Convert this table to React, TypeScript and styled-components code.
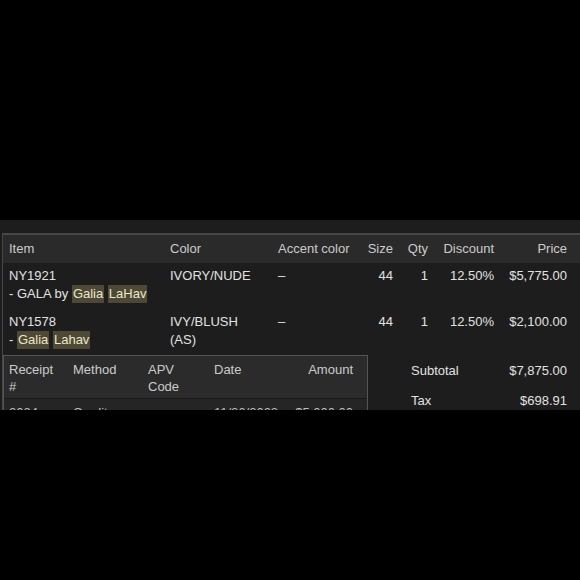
import { FC, ReactNode } from 'react';
import styled, { createGlobalStyle } from 'styled-components';

const Global = createGlobalStyle`
  html, body {
    margin: 0;
    background: #000;
  }
  body {
    font-family: 'Liberation Sans', Arial, Helvetica, sans-serif;
    font-size: 13px;
  }
`;

const itemCols = '161px 108px 86px 39px 35px 66px 1fr';
const payCols = '64px 75px 66px 70px 1fr';

const Page = styled.div`
  width: 580px;
  height: 580px;
  display: flex;
  flex-direction: column;
  background: #000;
`;

const Spacer = styled.div`
  height: 220px;
  flex: none;
`;

const Panel = styled.div`
  height: 190px;
  flex: none;
  overflow: hidden;
  background: #1d1d1d;
  padding-top: 13px;
  box-sizing: border-box;
`;

const Table = styled.div`
  margin-left: 2px;
  border-top: 2px solid #474747;
  border-left: 1px solid #474747;
`;

const Row = styled.div<{ $head?: boolean }>`
  display: grid;
  grid-template-columns: ${itemCols};
  background: ${(p) => (p.$head ? '#2a2a2a' : '#1d1d1d')};
  color: ${(p) => (p.$head ? '#cbcbcb' : '#e2e2e2')};
  padding: ${(p) => (p.$head ? '5px 0 5px' : '4px 0 6px')};
  line-height: 18px;
`;

const Cell = styled.div<{ $right?: boolean }>`
  padding: ${(p) => (p.$right ? '0 4px 0 0' : '0 0 0 6px')};
  text-align: ${(p) => (p.$right ? 'right' : 'left')};
  white-space: nowrap;
`;

const PriceCell = styled.div`
  padding-right: 13px;
  text-align: right;
  white-space: nowrap;
`;

const Mark = styled.span`
  display: inline-block;
  background: #4e4934;
  color: #ebe6cc;
  padding: 0 1px;
  line-height: 18px;
`;

const Bottom = styled.div`
  display: flex;
`;

const Payments = styled.div`
  width: 365px;
  flex: none;
  border: 1px solid #555;
  border-bottom: none;
  box-sizing: border-box;
`;

const PayRow = styled.div<{ $head?: boolean }>`
  display: grid;
  grid-template-columns: ${payCols};
  background: ${(p) => (p.$head ? '#2b2b2b' : '#252525')};
  color: ${(p) => (p.$head ? '#cbcbcb' : '#bcbcbc')};
  padding: ${(p) => (p.$head ? '5px 0 3px' : '5px 0')};
  line-height: 17px;
  border-bottom: 1px solid #1a1a1a;
  white-space: nowrap;
`;

const PayCell = styled.div`
  padding-left: 5px;
`;

const PayAmount = styled.div`
  padding-right: 14px;
  text-align: right;
`;

const Summary = styled.div`
  flex: 1;
  display: flex;
  flex-direction: column;
  gap: 12px;
  padding: 7px 13px 0 43px;
  color: #e2e2e2;
  line-height: 18px;
`;

const SumRow = styled.div`
  display: flex;
  justify-content: space-between;
`;

const Item: FC<{ code: string; children: ReactNode }> = ({ code, children }) => (
  <Cell>
    {code}
    <br />
    {children}
  </Cell>
);

export default function App() {
  return (
    <Page>
      <Global />
      <Spacer />
      <Panel>
        <Table>
          <Row $head>
            <Cell>Item</Cell>
            <Cell>Color</Cell>
            <Cell>Accent color</Cell>
            <Cell $right>Size</Cell>
            <Cell $right>Qty</Cell>
            <Cell $right>Discount</Cell>
            <PriceCell>Price</PriceCell>
          </Row>
          <Row>
            <Item code="NY1921">
              - GALA by <Mark>Galia</Mark> <Mark>LaHav</Mark>
            </Item>
            <Cell>IVORY/NUDE</Cell>
            <Cell>–</Cell>
            <Cell $right>44</Cell>
            <Cell $right>1</Cell>
            <Cell $right>12.50%</Cell>
            <PriceCell>$5,775.00</PriceCell>
          </Row>
          <Row>
            <Item code="NY1578">
              - <Mark>Galia</Mark> <Mark>Lahav</Mark>
            </Item>
            <Cell>
              IVY/BLUSH
              <br />
              (AS)
            </Cell>
            <Cell>–</Cell>
            <Cell $right>44</Cell>
            <Cell $right>1</Cell>
            <Cell $right>12.50%</Cell>
            <PriceCell>$2,100.00</PriceCell>
          </Row>
          <Bottom>
            <Payments>
              <PayRow $head>
                <PayCell>
                  Receipt
                  <br />#
                </PayCell>
                <PayCell>Method</PayCell>
                <PayCell>
                  APV
                  <br />
                  Code
                </PayCell>
                <PayCell>Date</PayCell>
                <PayAmount>Amount</PayAmount>
              </PayRow>
              <PayRow>
                <PayCell>2024</PayCell>
                <PayCell>Credit</PayCell>
                <PayCell></PayCell>
                <PayCell>11/26/2023</PayCell>
                <PayAmount>$5,000.00</PayAmount>
              </PayRow>
            </Payments>
            <Summary>
              <SumRow>
                <span>Subtotal</span>
                <span>$7,875.00</span>
              </SumRow>
              <SumRow>
                <span>Tax</span>
                <span>$698.91</span>
              </SumRow>
            </Summary>
          </Bottom>
        </Table>
      </Panel>
    </Page>
  );
}
